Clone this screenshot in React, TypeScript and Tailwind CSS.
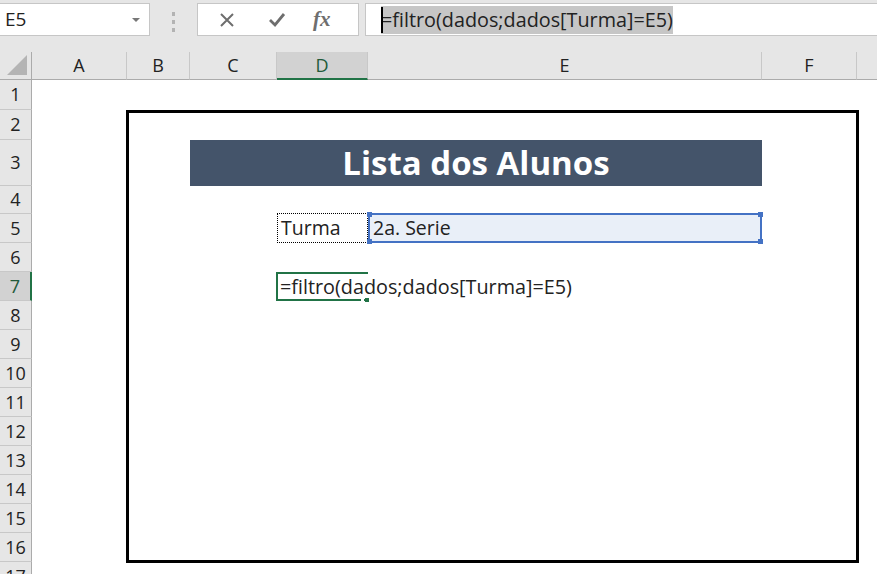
import React from "react";

const COLS = ["A", "B", "C", "D", "E", "F"];
const ROWS = Array.from({ length: 17 }, (_, i) => i + 1);
const FORMULA = "=filtro(dados;dados[Turma]=E5)";

export default function App() {
  return (
    <div className="w-[877px] h-[574px] overflow-hidden bg-[#e6e6e6] font-['Open_Sans','Noto_Sans',sans-serif] text-[#222]">
      {/* formula bar */}
      <div className="flex h-[52px] items-start pt-[3px]">
        <div className="flex h-[33px] w-[150px] items-center justify-between border border-l-0 border-[#c6c6c6] bg-white pl-[5px] pr-[9px] text-[19px]">
          <span>E5</span>
          <span className="h-0 w-0 border-x-[4px] border-t-[4px] border-x-transparent border-t-[#777]" />
        </div>
        <div className="flex w-[47px] flex-col items-center gap-[4px] pt-[9px]">
          <span className="h-[4px] w-[3px] bg-[#b3b3b3]" />
          <span className="h-[4px] w-[3px] bg-[#b3b3b3]" />
          <span className="h-[4px] w-[3px] bg-[#b3b3b3]" />
        </div>
        <div className="flex h-[33px] w-[162px] items-center border border-[#c6c6c6] bg-white">
          <svg width="16" height="16" viewBox="0 0 16 16" className="ml-[21px]">
            <path d="M2 2 L14 14 M14 2 L2 14" stroke="#6e6e6e" strokeWidth="2" fill="none" />
          </svg>
          <svg width="18" height="16" viewBox="0 0 18 16" className="ml-[33px]">
            <path d="M2 8 L7 13 L16 2" stroke="#6e6e6e" strokeWidth="2.8" fill="none" />
          </svg>
          <span className="ml-[27px] font-['Liberation_Serif',serif] text-[21px] italic font-semibold text-[#6e6e6e]">fx</span>
        </div>
        <div className="ml-[6px] flex h-[33px] flex-1 items-center border border-r-0 border-[#c6c6c6] bg-white pl-[15px]">
          <span className="relative bg-[#c6c6c6] py-[2px] text-[19.8px] leading-[24px] text-[#222]">
            <span className="absolute left-0 top-[1px] h-[26px] w-[1.5px] bg-black" />
            {FORMULA}
          </span>
        </div>
      </div>

      {/* sheet */}
      <div className="grid grid-cols-[32px_95px_63px_87px_91px_394px_95px_1fr] grid-rows-[28px_30px_30px_46px_28px_29px_29px_29px_29px_29px_29px_29px_29px_29px_29px_29px_29px_29px]">
        {/* corner */}
        <div className="relative border-b border-r border-[#ababab] bg-[#e6e6e6]">
          <span className="absolute bottom-[4px] right-[4px] h-0 w-0 border-b-[20px] border-l-[20px] border-b-[#b4b4b4] border-l-transparent" />
        </div>
        {COLS.map((c) => (
          <div
            key={c}
            className={
              c === "D"
                ? "flex items-center justify-center border-b-2 border-r border-b-[#217346] border-r-[#c8c8c8] bg-[#d2d2d2] text-[18px] text-[#215a3a]"
                : "flex items-center justify-center border-b border-r border-b-[#ababab] border-r-[#c8c8c8] bg-[#e6e6e6] text-[18px] text-[#222]"
            }
          >
            {c}
          </div>
        ))}
        <div className="border-b border-[#ababab] bg-[#e6e6e6]" />

        {/* row headers */}
        {ROWS.map((r) => (
          <div
            key={r}
            style={{ gridColumn: 1, gridRow: r + 1 }}
            className={
              r === 7
                ? "flex items-center justify-center border-b border-r-2 border-b-[#c8c8c8] border-r-[#217346] bg-[#d2d2d2] text-[18px] text-[#215a3a]"
                : "flex items-center justify-center border-b border-r border-b-[#c8c8c8] border-r-[#ababab] bg-[#e6e6e6] text-[18px] text-[#222]"
            }
          >
            {r}
          </div>
        ))}

        {/* white sheet body */}
        <div className="col-start-2 col-end-9 row-start-2 row-end-19 bg-white" />

        {/* outer frame B2:F16 */}
        <div className="col-start-3 col-end-8 row-start-3 row-end-18 -ml-[1px] -mr-[2px] -mb-[1px] border-[3px] border-black" />

        {/* title C3:E3 */}
        <div className="col-start-4 col-end-7 row-start-4 row-end-5 flex items-center justify-center bg-[#44546a] text-[33px] font-bold text-white">
          Lista dos Alunos
        </div>

        {/* D5 */}
        <div className="col-start-5 col-end-6 row-start-6 row-end-7 -mt-[1px] flex items-center border border-dotted border-black pl-[3px] text-[19.5px]">
          Turma
        </div>

        {/* E5 */}
        <div className="relative col-start-6 col-end-7 row-start-6 row-end-7 -mt-[1px] flex items-center border-2 border-[#4472c4] bg-[#e9eff8] pl-[3px] text-[19.5px]">
          2a. Serie
          <span className="absolute -left-[3px] -top-[3px] h-[5px] w-[5px] bg-[#4472c4]" />
          <span className="absolute -bottom-[3px] -left-[3px] h-[5px] w-[5px] bg-[#4472c4]" />
          <span className="absolute -right-[3px] -top-[3px] h-[5px] w-[5px] bg-[#4472c4]" />
          <span className="absolute -bottom-[3px] -right-[3px] h-[5px] w-[5px] bg-[#4472c4]" />
        </div>

        {/* D7 active, editing */}
        <div className="relative col-start-5 col-end-6 row-start-8 row-end-9 -ml-[1px] flex items-center border-y-2 border-l-2 border-[#217346]">
          <span className="absolute -bottom-[2px] right-[4px] h-[2px] w-[3px] bg-white" />
          <span className="absolute -bottom-[3px] -right-[1px] h-[4px] w-[4px] bg-[#217346]" />
          <span className="relative z-10 whitespace-nowrap bg-white pl-[2px] text-[19.8px] leading-[22px]">
            {FORMULA}
          </span>
        </div>
      </div>
    </div>
  );
}
